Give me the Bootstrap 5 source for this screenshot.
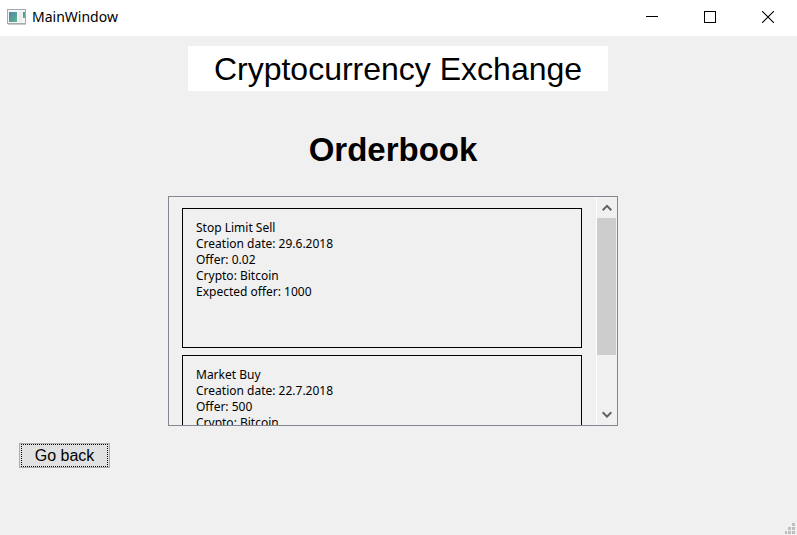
<!DOCTYPE html>
<html lang="en">
<head>
<meta charset="utf-8">
<meta name="viewport" content="width=device-width, initial-scale=1">
<title>MainWindow</title>
<link href="https://cdn.jsdelivr.net/npm/bootstrap@5.3.0/dist/css/bootstrap.min.css" rel="stylesheet">
<style>
  body { background: #f0f0f0; color: #000; font-family: "Liberation Sans", Arial, sans-serif; }
  .titlebar { height: 36px; font: 14px/20px "Noto Sans", "Segoe UI", sans-serif; padding-left: 7px; }
  .titlebar-label { height: 34px; gap: 6px; }
  .caption-btn { width: 58px; height: 34px; }
  .app-body { padding-right: 1px; }
  .app-title { max-width: 420px; height: 45px; margin-top: 10px; font-size: 32px; line-height: 47px; }
  .lower { padding-right: 10px; }
  .heading { font-size: 33px; line-height: 40px; margin: 39px 0 26px; }
  .orders { max-width: 450px; height: 230px; border: 1px solid #828790; }
  .order-list { padding: 11px 14px 11px 13px; gap: 7px; overflow: hidden; }
  .order { flex: 0 0 140px; border: 1px solid #000; padding: 11px 13px; font: 12px/16px "Noto Sans", Tahoma, sans-serif; }
  .scroller { width: 21px; border-left: 1px solid #fff; padding-right: 1px; }
  .scroller button { height: 21px; }
  .thumb { height: 137px; background: #cdcdcd; }
  .back { width: 91px; height: 25px; margin: 17px 0 0 19px; padding: 0 1px; background: #e1e1e1; border: 1px solid #adadad; font-size: 16px; }
  .back span { border: 1px dotted #000; line-height: 21px; }
</style>
<script src="https://cdn.jsdelivr.net/npm/bootstrap@5.3.0/dist/js/bootstrap.bundle.min.js"></script>
</head>
<body class="d-flex flex-column min-vh-100">
<header class="titlebar bg-white d-flex align-items-start">
  <div class="titlebar-label d-flex align-items-center">
    <svg width="19" height="16" viewBox="0 0 19 16" aria-hidden="true">
      <defs><linearGradient id="pane" x1="0" y1="0" x2="1" y2="1"><stop offset="0" stop-color="#4f84ab"/><stop offset="1" stop-color="#62b587"/></linearGradient></defs>
      <rect x=".5" y=".5" width="18" height="14" fill="#f5f5f5" stroke="#a5a9b1"/>
      <path d="M1 15.5h18" stroke="#c9c9c9"/>
      <rect x="2" y="3" width="8" height="10" fill="url(#pane)"/>
      <rect x="12" y="3" width="3" height="10" fill="#ebebeb"/>
      <rect x="16" y="3" width="2" height="6" fill="url(#pane)"/>
    </svg>
    <span>MainWindow</span>
  </div>
  <div class="d-flex ms-auto">
    <button type="button" class="caption-btn btn p-0 border-0 rounded-0 d-flex align-items-center justify-content-center" aria-label="Minimize"><svg width="12" height="12"><path d="M0 5.5h12" stroke="#000"/></svg></button>
    <button type="button" class="caption-btn btn p-0 border-0 rounded-0 d-flex align-items-center justify-content-center" aria-label="Maximize"><svg width="12" height="12"><rect x=".5" y=".5" width="11" height="11" fill="none" stroke="#000"/></svg></button>
    <button type="button" class="caption-btn btn p-0 border-0 rounded-0 d-flex align-items-center justify-content-center" aria-label="Close"><svg width="12" height="12"><path d="M0 0l12 12M12 0L0 12" stroke="#000" stroke-width="1.1"/></svg></button>
  </div>
</header>
<main class="app-body flex-grow-1 d-flex flex-column">
  <h1 class="app-title bg-white w-100 mx-auto mb-0 fw-normal text-center text-nowrap">Cryptocurrency Exchange</h1>
  <div class="lower">
    <h2 class="heading fw-bold text-center">Orderbook</h2>
    <section class="orders d-flex w-100 mx-auto" aria-label="Orders">
      <div class="order-list d-flex flex-column flex-grow-1">
        <article class="order">
          <div>Stop Limit Sell</div>
          <div>Creation date: 29.6.2018</div>
          <div>Offer: 0.02</div>
          <div>Crypto: Bitcoin</div>
          <div>Expected offer: 1000</div>
        </article>
        <article class="order">
          <div>Market Buy</div>
          <div>Creation date: 22.7.2018</div>
          <div>Offer: 500</div>
          <div>Crypto: Bitcoin</div>
        </article>
      </div>
      <div class="scroller d-flex flex-column flex-shrink-0">
        <button type="button" class="btn p-0 border-0 rounded-0 d-flex align-items-center justify-content-center" aria-label="Scroll up"><svg width="10" height="8"><path d="M.7 6.2L5 1.9l4.3 4.3" fill="none" stroke="#606060" stroke-width="2"/></svg></button>
        <div class="thumb"></div>
        <button type="button" class="mt-auto btn p-0 border-0 rounded-0 d-flex align-items-center justify-content-center" aria-label="Scroll down"><svg width="10" height="8"><path d="M.7 1.3L5 5.6l4.3-4.3" fill="none" stroke="#606060" stroke-width="2"/></svg></button>
      </div>
    </section>
  </div>
  <button type="button" class="back"><span class="d-block">Go back</span></button>
  <div class="mt-auto d-flex justify-content-end">
    <svg width="11" height="12" fill="#bfbfbf" aria-hidden="true"><path d="M7 0h3v3h-3zM3 4h3v3h-3zM7 4h3v3h-3zM0 8h2v3h-2zM3 8h3v3h-3zM7 8h3v3h-3z"/></svg>
  </div>
</main>
</body>
</html>
